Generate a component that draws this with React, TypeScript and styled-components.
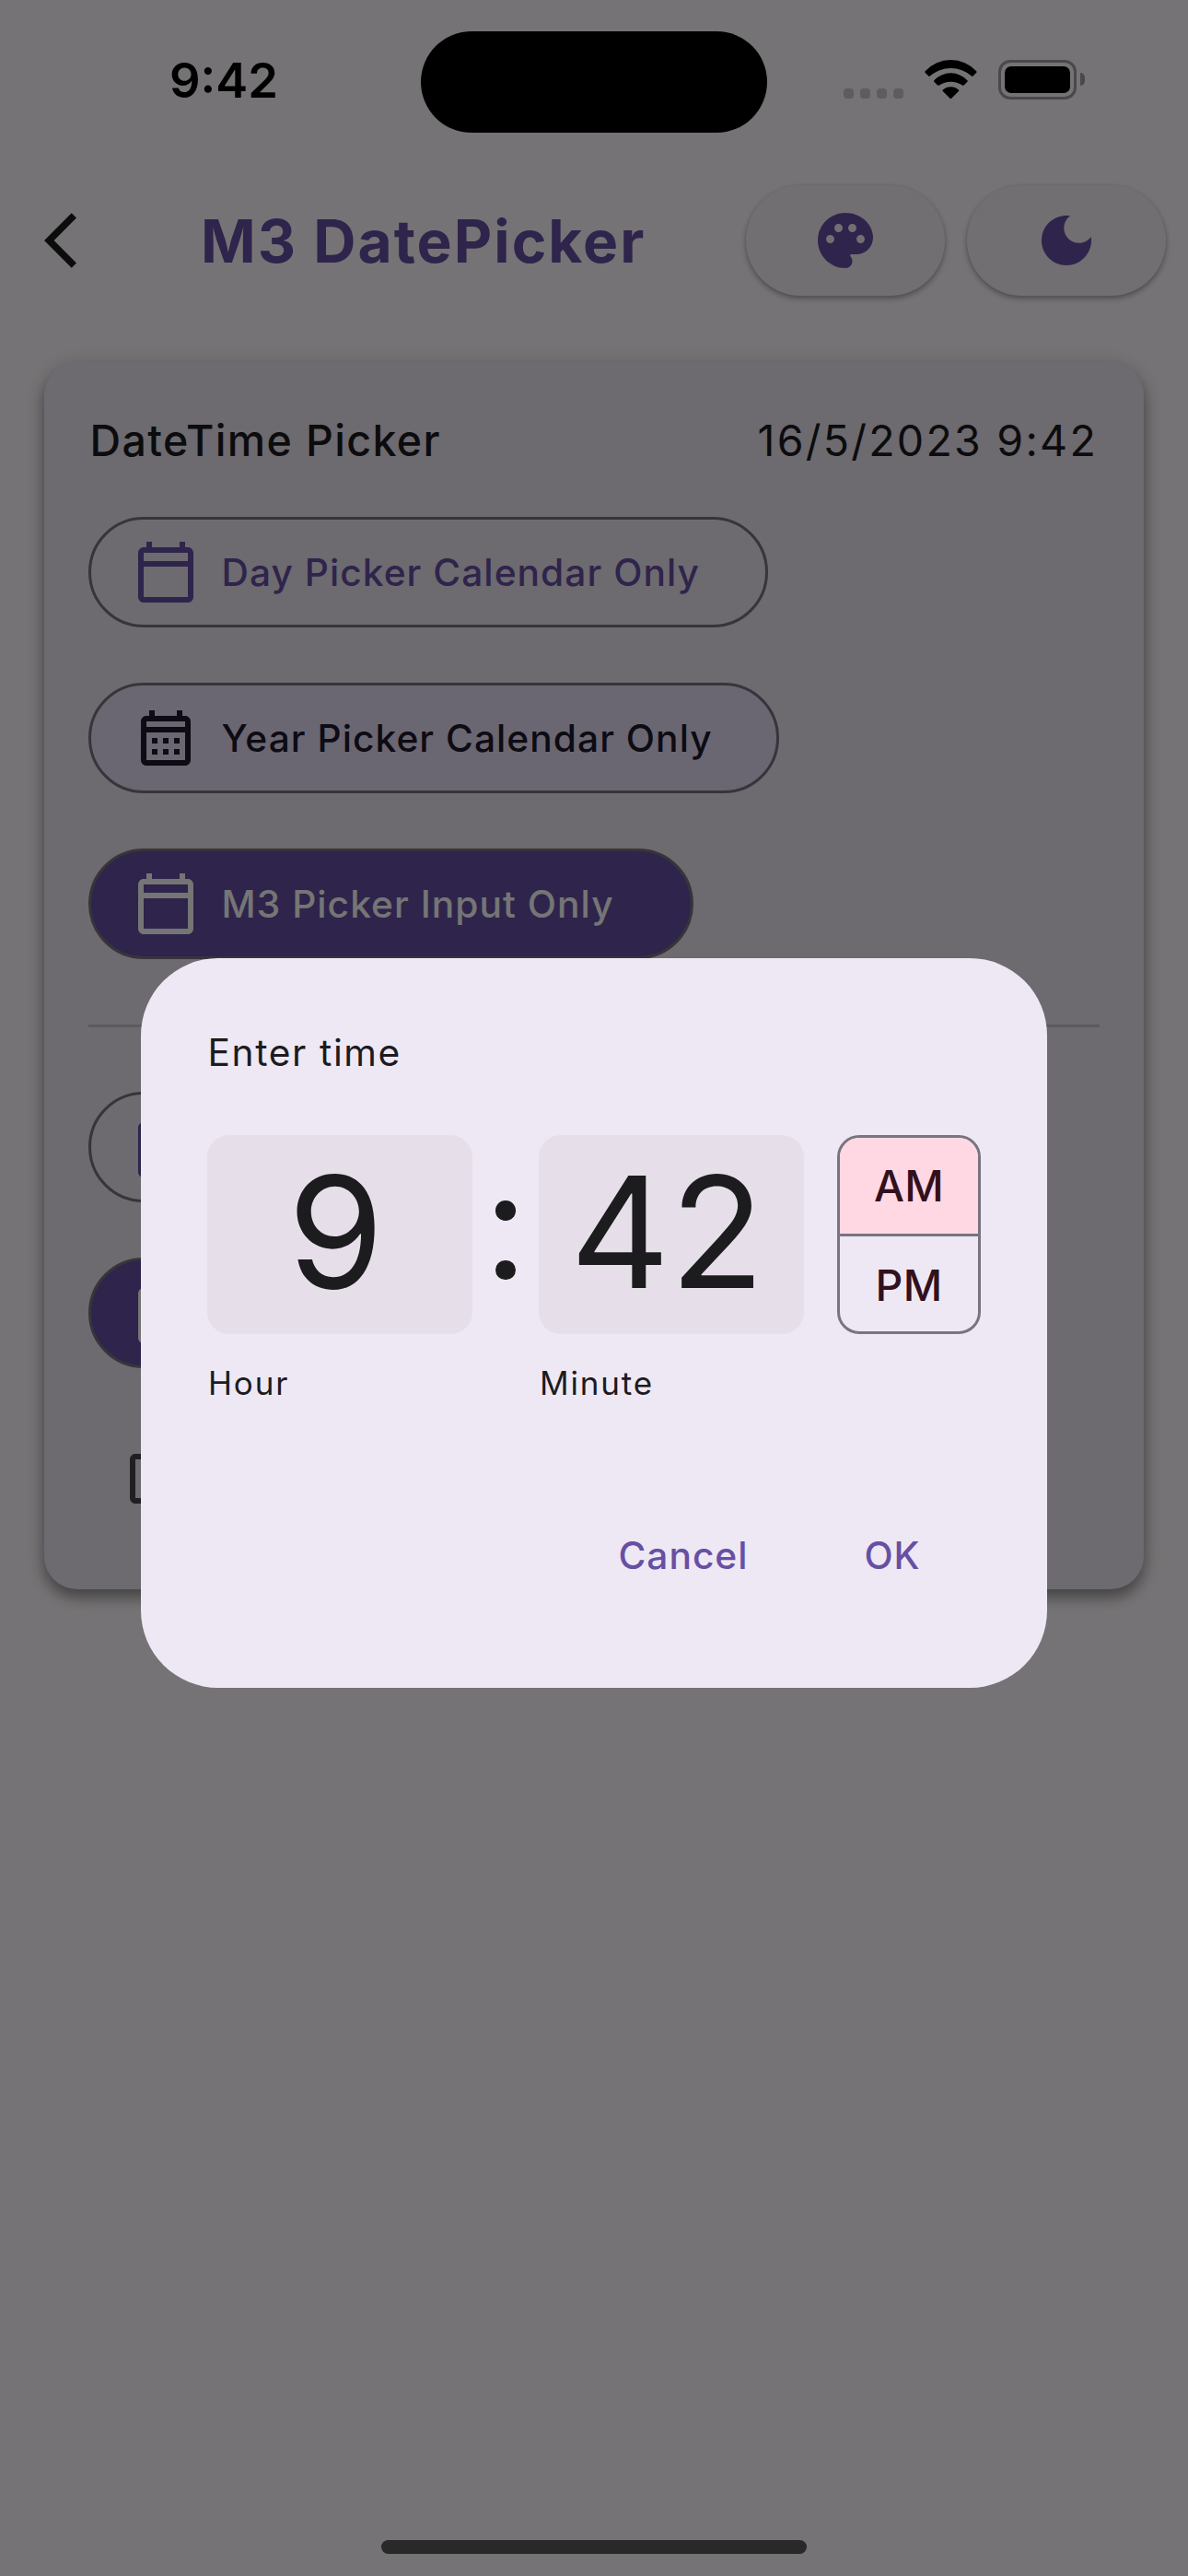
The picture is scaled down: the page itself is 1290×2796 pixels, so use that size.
import React from "react";
import styled, { createGlobalStyle, css } from "styled-components";

const Global = createGlobalStyle`
  * { box-sizing: border-box; }
  html, body { margin: 0; padding: 0; }
  body { font-family: Inter, "Liberation Sans", sans-serif; background: #fffbfe; }
  button { font-family: inherit; margin: 0; }
`;

const Screen = styled.div`
  position: relative;
  width: 1290px;
  height: 2796px;
  overflow: hidden;
  background: #fffbfe;
  color: #1c1b1e;
`;

const StatusBar = styled.header`
  position: relative;
  z-index: 2;
  height: 177px;
  display: grid;
  grid-template-columns: 457px 376px 457px;
  padding-top: 34px;
  color: #000;
`;

const Clock = styled.div`
  padding: 24px 0 0 184px;
  font-size: 52.5px;
  line-height: 58px;
  font-weight: 600;
`;

const Island = styled.div`
  height: 110px;
  border-radius: 55px;
  background: #000;
`;

const Indicators = styled.div`
  display: flex;
  align-items: flex-start;
  padding: 31px 0 0 83px;
`;

const SignalDots = styled.div`
  display: flex;
  gap: 7px;
  padding-top: 31px;
  margin-right: 23px;
`;

const SignalDot = styled.i`
  width: 11px;
  height: 11px;
  border-radius: 4px;
  background: #5e5c5f;
`;

const WifiGlyph = styled.svg`
  width: 57px;
  height: 43px;
  margin-right: 23px;
`;

const BatteryBody = styled.div`
  width: 85px;
  height: 43px;
  padding: 4px;
  border: 3px solid #4a484b;
  border-radius: 13px;
`;

const BatteryLevel = styled.div`
  height: 29px;
  border-radius: 7px;
  background: #000;
`;

const BatteryCap = styled.div`
  width: 5px;
  height: 14px;
  margin: 14px 0 0 4px;
  border-radius: 0 5px 5px 0;
  background: #4a484b;
`;

const AppBar = styled.nav`
  height: 168px;
  display: flex;
  align-items: center;
  padding-right: 24px;
`;

const BackButton = styled.button`
  width: 168px;
  height: 168px;
  padding: 0;
  border: 0;
  background: none;
  color: #1c1b1e;
  display: grid;
  place-items: center;
`;

const Title = styled.h1`
  margin: 0;
  padding: 2px 0 0 50px;
  flex: 1;
  font-size: 64px;
  line-height: 84px;
  font-weight: 650;
  letter-spacing: 2.05px;
  color: #6750a4;
  white-space: nowrap;
`;

const ActionGroup = styled.div`
  display: flex;
  gap: 24px;
`;

const ActionButton = styled.button`
  width: 216px;
  height: 120px;
  padding: 0;
  border: 0;
  border-radius: 60px;
  background: #f7f2f9;
  color: #6750a4;
  display: grid;
  place-items: center;
  box-shadow: 0 3px 6px rgba(0, 0, 0, 0.3), 0 1px 5px rgba(0, 0, 0, 0.08);
`;

const Glyph = styled.svg`
  width: 72px;
  height: 72px;
  flex: none;
  fill: currentColor;
`;

const Card = styled.main`
  margin: 48px;
  height: 1332px;
  padding: 48px;
  border-radius: 36px;
  background: #eee8f4;
  box-shadow: 0 9px 15px rgba(0, 0, 0, 0.36), 0 2px 26px rgba(0, 0, 0, 0.12);
  display: flex;
  flex-direction: column;
  align-items: flex-start;
`;

const CardHeader = styled.div`
  align-self: stretch;
  height: 72px;
  margin-bottom: 48px;
  padding: 3px 2px 0 1.5px;
  display: flex;
  justify-content: space-between;
  align-items: center;
  font-size: 46.5px;
  line-height: 69px;
  white-space: nowrap;
`;

const CardTitle = styled.span`
  font-weight: 500;
  letter-spacing: 1.37px;
`;

const CardValue = styled.span`
  font-weight: 400;
  letter-spacing: 2.25px;
`;

const variants = {
  outlined: css`background: transparent; color: #6750a4;`,
  tonal: css`background: #e8def8; color: #1d192b;`,
  filled: css`background: #6750a4; color: #fff;`,
};

const PickerButton = styled.button<{ $variant: keyof typeof variants; $width: number }>`
  width: ${(p) => p.$width}px;
  height: 120px;
  flex: none;
  padding: 1px 0 0 45px;
  border: 3px solid #79747e;
  border-radius: 60px;
  display: flex;
  align-items: center;
  gap: 24.5px;
  font-size: 40.7px;
  font-weight: 500;
  letter-spacing: 1.05px;
  white-space: nowrap;
  ${(p) => variants[p.$variant]}
  & > svg { margin-top: -1px; }
  & + & { margin-top: 60px; }
`;

const Divider = styled.hr`
  align-self: stretch;
  flex: none;
  height: 3px;
  margin: 70.5px 0;
  border: 0;
  background: #cac4d0;
`;

const IconButton = styled.button`
  width: 144px;
  height: 144px;
  flex: none;
  margin-top: 48px;
  padding: 0;
  border: 0;
  background: none;
  color: #49454f;
  display: grid;
  place-items: center;
`;

const Scrim = styled.div`
  position: absolute;
  inset: 0;
  z-index: 1;
  padding: 177px 0 102px;
  background: rgba(0, 0, 0, 0.54);
  display: flex;
  align-items: center;
  justify-content: center;
`;

const Dialog = styled.section`
  width: 984px;
  height: 792px;
  padding: 72px;
  border-radius: 84px;
  background: #eee8f4;
  display: flex;
  flex-direction: column;
`;

const DialogTitle = styled.h2`
  margin: 0;
  height: 60px;
  padding: 1px 0 0 0.5px;
  font-size: 40.7px;
  line-height: 60px;
  font-weight: 400;
  letter-spacing: 1.6px;
`;

const TimeRow = styled.div`
  display: flex;
  align-items: flex-start;
  margin-top: 60px;
`;

const Field = styled.label`
  width: 288px;
  display: flex;
  flex-direction: column;
`;

const FieldBox = styled.div`
  height: 216px;
  padding: 0 9px 6px 0;
  border-radius: 24px;
  background: #e6dfea;
  display: flex;
  align-items: center;
  justify-content: center;
  font-size: 168px;
  line-height: 210px;
  font-weight: 400;
`;

const FieldLabel = styled.span`
  margin-top: 29px;
  padding-left: 1px;
  font-size: 35px;
  line-height: 48px;
  letter-spacing: 1.85px;
`;

const Colon = styled.div`
  width: 72px;
  height: 216px;
  display: flex;
  flex-direction: column;
  align-items: center;
  justify-content: center;
  gap: 43px;
  padding-top: 13px;
`;

const ColonDot = styled.i`
  width: 21.5px;
  height: 21.5px;
  border-radius: 50%;
  background: #1c1b1e;
`;

const PeriodToggle = styled.div`
  width: 156px;
  height: 216px;
  margin-left: 36px;
  border: 3px solid #79747e;
  border-radius: 24px;
  overflow: hidden;
  display: flex;
  flex-direction: column;
`;

const Period = styled.button<{ $selected?: boolean }>`
  height: 104px;
  flex: none;
  padding: 0;
  border: 0;
  background: ${(p) => (p.$selected ? "#ffd8e4" : "transparent")};
  color: #31111d;
  font-size: 46.5px;
  font-weight: 500;
  letter-spacing: 0.4px;
  & + & {
    height: 106px;
    padding-top: 3px;
    border-top: 3px solid #79747e;
  }
`;

const DialogActions = styled.div`
  flex: 1;
  display: flex;
  justify-content: flex-end;
  align-items: flex-end;
`;

const TextButton = styled.button<{ $width: number }>`
  width: ${(p) => p.$width}px;
  height: 144px;
  padding: 2px 0 0;
  border: 0;
  background: none;
  color: #6750a4;
  font-size: 40.7px;
  font-weight: 500;
  letter-spacing: 1px;
`;

const HomeIndicator = styled.div`
  position: absolute;
  z-index: 2;
  left: 414px;
  bottom: 24px;
  width: 462px;
  height: 15px;
  border-radius: 8px;
  background: #292929;
`;

const paths = {
  back: "M11.67 3.87L9.9 2.1 0 12l9.9 9.9 1.77-1.77L3.54 12z",
  palette:
    "M12 2C6.49 2 2 6.49 2 12s4.49 10 10 10c1.38 0 2.5-1.12 2.5-2.5 0-.61-.23-1.2-.64-1.67-.08-.1-.13-.21-.13-.33 0-.28.22-.5.5-.5H16c3.31 0 6-2.69 6-6 0-4.96-4.49-9-10-9zm5.5 11c-.83 0-1.5-.67-1.5-1.5s.67-1.5 1.5-1.5 1.5.67 1.5 1.5-.67 1.5-1.5 1.5zm-3-4c-.83 0-1.5-.67-1.5-1.5S13.67 6 14.5 6s1.5.67 1.5 1.5S15.33 9 14.5 9zM5 11.5C5 10.67 5.67 10 6.5 10S8 10.67 8 11.5 7.33 13 6.5 13 5 12.33 5 11.5zm6-4C11 8.33 10.33 9 9.5 9S8 8.33 8 7.5 8.67 6 9.5 6s1.5.67 1.5 1.5z",
  moon: "M12 3c-4.97 0-9 4.03-9 9s4.03 9 9 9 9-4.03 9-9c0-.46-.04-.92-.1-1.36-.98 1.37-2.58 2.26-4.4 2.26-2.98 0-5.4-2.42-5.4-5.4 0-1.81.89-3.42 2.26-4.4-.44-.06-.9-.1-1.36-.1z",
  day: "M20 3h-1V1h-2v2H7V1H5v2H4c-1.1 0-2 .9-2 2v16c0 1.1.9 2 2 2h16c1.1 0 2-.9 2-2V5c0-1.1-.9-2-2-2zm0 18H4V10h16v11zm0-13H4V5h16v3z",
  month:
    "M19 4h-1V2h-2v2H8V2H6v2H5c-1.11 0-1.99.9-1.99 2L3 20c0 1.1.89 2 2 2h14c1.1 0 2-.9 2-2V6c0-1.1-.9-2-2-2zm0 16H5V10h14v10zm0-12H5V6h14v2zM9 14H7v-2h2v2zm4 0h-2v-2h2v2zm4 0h-2v-2h2v2zm-8 4H7v-2h2v2zm4 0h-2v-2h2v2zm4 0h-2v-2h2v2z",
  frame:
    "M19 5v14H5V5h14m0-2H5c-1.1 0-2 .9-2 2v14c0 1.1.9 2 2 2h14c1.1 0 2-.9 2-2V5c0-1.1-.9-2-2-2z",
};

const Icon = ({ name }: { name: keyof typeof paths }) => (
  <Glyph viewBox="0 0 24 24" aria-hidden>
    <path d={paths[name]} />
  </Glyph>
);

export default function App() {
  return (
    <>
      <Global />
      <Screen>
        <StatusBar>
          <Clock>9:42</Clock>
          <Island />
          <Indicators>
            <SignalDots>
              <SignalDot />
              <SignalDot />
              <SignalDot />
              <SignalDot />
            </SignalDots>
            <WifiGlyph viewBox="0 0 57 43" aria-hidden>
              <path d="M.6 12.2A37.8 37.8 0 0 1 56.2 12.2Q57 13 56.3 13.8L52.6 17.6Q51.8 18.3 51 17.6A34 34 0 0 0 5.8 17.6Q5 18.3 4.2 17.6L.5 13.8Q-.2 13 .6 12.2Z" />
              <path d="M10.4 22.2A24.5 24.5 0 0 1 46.4 22.2Q47.2 23 46.5 23.7L42.6 27.6Q41.8 28.3 41 27.6A22.3 22.3 0 0 0 15.8 27.6Q15 28.3 14.2 27.6L10.3 23.7Q9.6 23 10.4 22.2Z" />
              <path d="M19.8 32.6A12.5 12.5 0 0 1 37 32.6Q37.7 33.2 37 34L29.2 41.8Q28.4 42.5 27.6 41.8L19.8 34Q19.1 33.2 19.8 32.6Z" />
            </WifiGlyph>
            <BatteryBody>
              <BatteryLevel />
            </BatteryBody>
            <BatteryCap />
          </Indicators>
        </StatusBar>

        <AppBar>
          <BackButton aria-label="Back">
            <Icon name="back" />
          </BackButton>
          <Title>M3 DatePicker</Title>
          <ActionGroup>
            <ActionButton aria-label="Palette">
              <Icon name="palette" />
            </ActionButton>
            <ActionButton aria-label="Dark mode">
              <Icon name="moon" />
            </ActionButton>
          </ActionGroup>
        </AppBar>

        <Card>
          <CardHeader>
            <CardTitle>DateTime Picker</CardTitle>
            <CardValue>16/5/2023 9:42</CardValue>
          </CardHeader>
          <PickerButton $variant="outlined" $width={738}>
            <Icon name="day" />
            <span>Day Picker Calendar Only</span>
          </PickerButton>
          <PickerButton $variant="tonal" $width={750}>
            <Icon name="month" />
            <span>Year Picker Calendar Only</span>
          </PickerButton>
          <PickerButton $variant="filled" $width={657}>
            <Icon name="day" />
            <span>M3 Picker Input Only</span>
          </PickerButton>
          <Divider />
          <PickerButton $variant="outlined" $width={600}>
            <Icon name="day" />
          </PickerButton>
          <PickerButton $variant="filled" $width={600}>
            <Icon name="day" />
          </PickerButton>
          <IconButton>
            <Icon name="frame" />
          </IconButton>
        </Card>

        <Scrim>
          <Dialog role="dialog">
            <DialogTitle>Enter time</DialogTitle>
            <TimeRow>
              <Field>
                <FieldBox>9</FieldBox>
                <FieldLabel>Hour</FieldLabel>
              </Field>
              <Colon>
                <ColonDot />
                <ColonDot />
              </Colon>
              <Field>
                <FieldBox>42</FieldBox>
                <FieldLabel>Minute</FieldLabel>
              </Field>
              <PeriodToggle>
                <Period $selected>AM</Period>
                <Period>PM</Period>
              </PeriodToggle>
            </TimeRow>
            <DialogActions>
              <TextButton $width={262}>Cancel</TextButton>
              <TextButton $width={192}>OK</TextButton>
            </DialogActions>
          </Dialog>
        </Scrim>
        <HomeIndicator />
      </Screen>
    </>
  );
}
